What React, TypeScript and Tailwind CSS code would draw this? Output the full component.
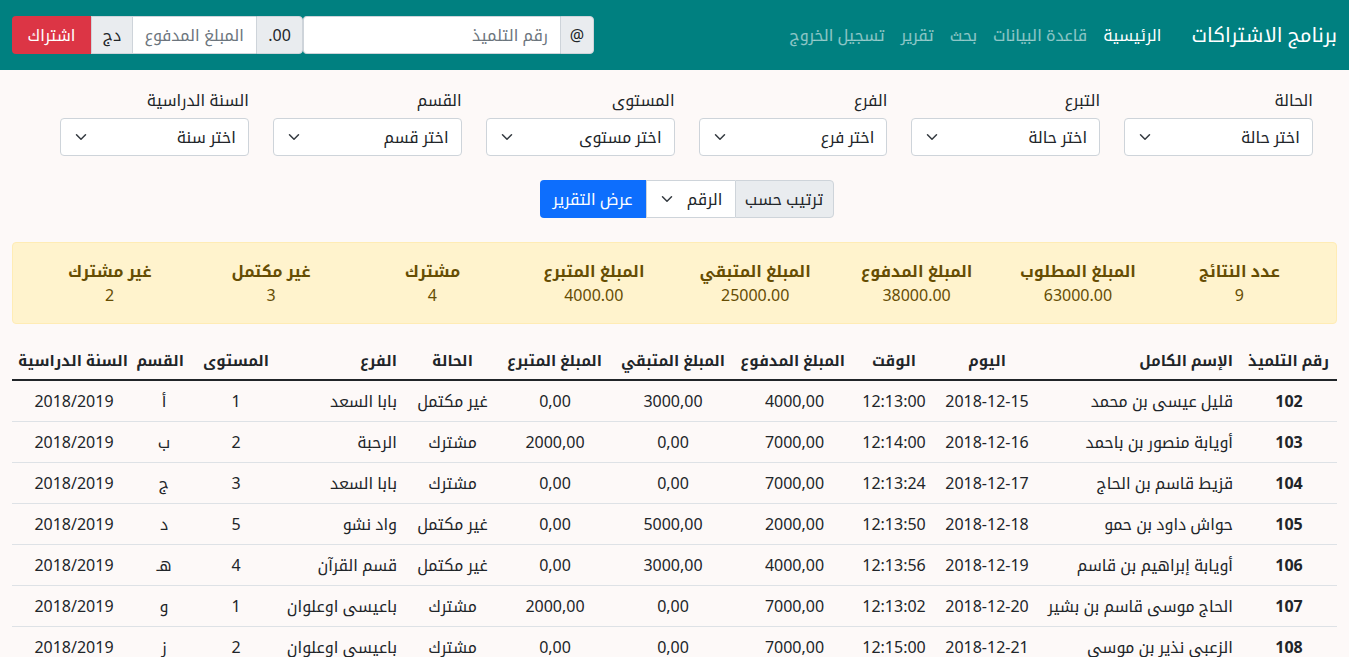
import React from "react";

const Chevron = () => (
  <svg width="16" height="12" viewBox="0 0 16 16" fill="none" stroke="#343a40" strokeWidth="2" strokeLinecap="round" strokeLinejoin="round">
    <path d="m2 5 6 6 6-6" />
  </svg>
);

const FakeSelect = ({ text, className = "" }: { text: string; className?: string }) => (
  <div className={`h-[38px] flex items-center justify-between bg-white border border-[#ced4da] px-3 text-[#212529] ${className}`}>
    <span>{text}</span>
    <Chevron />
  </div>
);

const filters = [
  { label: "الحالة", value: "اختر حالة" },
  { label: "التبرع", value: "اختر حالة" },
  { label: "الفرع", value: "اختر فرع" },
  { label: "المستوى", value: "اختر مستوى" },
  { label: "القسم", value: "اختر قسم" },
  { label: "السنة الدراسية", value: "اختر سنة" },
];

const stats = [
  { title: "عدد النتائج", value: "9" },
  { title: "المبلغ المطلوب", value: "63000.00" },
  { title: "المبلغ المدفوع", value: "38000.00" },
  { title: "المبلغ المتبقي", value: "25000.00" },
  { title: "المبلغ المتبرع", value: "4000.00" },
  { title: "مشترك", value: "4" },
  { title: "غير مكتمل", value: "3" },
  { title: "غير مشترك", value: "2" },
];

const rows = [
  ["102", "قليل عيسى بن محمد", "2018-12-15", "12:13:00", "4000,00", "3000,00", "0,00", "غير مكتمل", "بابا السعد", "1", "أ"],
  ["103", "أويابة منصور بن باحمد", "2018-12-16", "12:14:00", "7000,00", "0,00", "2000,00", "مشترك", "الرحبة", "2", "ب"],
  ["104", "قزيط قاسم بن الحاج", "2018-12-17", "12:13:24", "7000,00", "0,00", "0,00", "مشترك", "بابا السعد", "3", "ج"],
  ["105", "حواش داود بن حمو", "2018-12-18", "12:13:50", "2000,00", "5000,00", "0,00", "غير مكتمل", "واد نشو", "5", "د"],
  ["106", "أويابة إبراهيم بن قاسم", "2018-12-19", "12:13:56", "4000,00", "3000,00", "0,00", "غير مكتمل", "قسم القرآن", "4", "هـ"],
  ["107", "الحاج موسى قاسم بن بشير", "2018-12-20", "12:13:02", "7000,00", "0,00", "2000,00", "مشترك", "باعيسى اوعلوان", "1", "و"],
  ["108", "الزعبي نذير بن موسى", "2018-12-21", "12:15:00", "7000,00", "0,00", "0,00", "مشترك", "باعيسى اوعلوان", "2", "ز"],
  ["109", "بكلي يوسف بن عمر", "2018-12-22", "12:16:10", "0,00", "7000,00", "0,00", "غير مشترك", "الرحبة", "3", "ح"],
  ["110", "حمودة صالح بن أحمد", "2018-12-23", "12:17:45", "0,00", "7000,00", "0,00", "غير مشترك", "واد نشو", "4", "ط"],
];

const headers = [
  { t: "رقم التلميذ", w: "w-[96px]", a: "text-center" },
  { t: "الإسم الكامل", w: "w-[202px]", a: "text-right" },
  { t: "اليوم", w: "w-[104px]", a: "text-center" },
  { t: "الوقت", w: "w-[82px]", a: "text-center" },
  { t: "المبلغ المدفوع", w: "w-[117px]", a: "text-center" },
  { t: "المبلغ المتبقي", w: "w-[126px]", a: "text-center" },
  { t: "المبلغ المتبرع", w: "w-[110px]", a: "text-center" },
  { t: "الحالة", w: "w-[95px]", a: "text-center" },
  { t: "الفرع", w: "w-[125px]", a: "text-right" },
  { t: "المستوى", w: "w-[88px]", a: "text-center" },
  { t: "القسم", w: "w-[56px]", a: "text-center" },
  { t: "السنة الدراسية", w: "w-[124px]", a: "text-center" },
];

export default function App() {
  return (
    <div dir="rtl" className="min-h-screen whitespace-nowrap bg-[#fdf9f8] text-[16px] leading-6 text-[#212529] font-['Noto_Sans','Noto_Kufi_Arabic','Noto_Sans_Arabic','DejaVu_Sans',sans-serif]">
      {/* navbar */}
      <nav className="h-[70px] bg-[#008080] flex items-center px-3">
        <div className="text-[20px] text-white ml-[22px]">برنامج الاشتراكات</div>
        <div className="flex items-center">
          <a className="px-2 text-white">الرئيسية</a>
          <a className="px-2 text-white/55">قاعدة البيانات</a>
          <a className="px-2 text-white/55">بحث</a>
          <a className="px-2 text-white/55">تقرير</a>
          <a className="px-2 text-white/55">تسجيل الخروج</a>
        </div>
        <div className="ms-auto flex h-[38px]">
          <div className="flex">
            <span className="w-[34px] flex items-center justify-center bg-[#e9ecef] border border-[#ced4da] rounded-r-[4px]">@</span>
            <div className="w-[257px] flex items-center bg-white border border-[#ced4da] border-r-0 rounded-l-[4px] px-3 text-[#6c757d]">رقم التلميذ</div>
          </div>
          <div className="flex">
            <span dir="ltr" className="w-[47px] flex items-center justify-center bg-[#e9ecef] border border-[#ced4da] rounded-r-[4px]">.00</span>
            <div className="w-[124px] flex items-center overflow-hidden bg-white border border-[#ced4da] border-r-0 px-3 text-[#6c757d]">المبلغ المدفوع</div>
            <span className="w-[41px] flex items-center justify-center bg-[#e9ecef] border border-[#ced4da] border-r-0">دج</span>
            <button className="w-[79px] bg-[#dc3545] text-white rounded-l-[4px]">اشتراك</button>
          </div>
        </div>
      </nav>

      {/* filters */}
      <div className="pr-[36px] pl-[60px] pt-[18px]">
        <div className="flex gap-[24px]">
          {filters.map((f, i) => (
            <div key={i} className="w-[189px]">
              <div className="mb-[6px]">{f.label}</div>
              <FakeSelect text={f.value} className="rounded-[4px]" />
            </div>
          ))}
        </div>

        <div className="flex justify-center mt-[24px]">
          <span className="h-[38px] w-[99px] flex items-center justify-center bg-[#e9ecef] border border-[#ced4da] rounded-r-[4px]">ترتيب حسب</span>
          <FakeSelect text="الرقم" className="w-[89px] border-r-0" />
          <button className="h-[38px] w-[106px] bg-[#0d6efd] text-white rounded-l-[4px]">عرض التقرير</button>
        </div>
      </div>

      {/* summary */}
      <div className="mx-3 mt-[24px] bg-[#fff3cd] border border-[#ffecb5] rounded-[4px] p-4 grid grid-cols-8 text-[#664d03]">
        {stats.map((s, i) => (
          <div key={i} className="text-center">
            <div className="font-bold">{s.title}</div>
            <div>{s.value}</div>
          </div>
        ))}
      </div>

      {/* table */}
      <div className="px-3 mt-[16px]">
        <table className="w-full table-fixed border-collapse">
          <thead>
            <tr className="border-b-2 border-[#212529]">
              {headers.map((h, i) => (
                <th key={i} className={`${h.w} ${h.a} px-2 pt-2 pb-[7px] text-[15px] font-bold align-bottom`}>{h.t}</th>
              ))}
            </tr>
          </thead>
          <tbody>
            {rows.map((r, i) => (
              <tr key={i} className="border-b border-[#dee2e6]">
                <td className="p-2 text-center font-bold">{r[0]}</td>
                <td className="p-2 text-right">{r[1]}</td>
                <td className="p-2 text-center">{r[2]}</td>
                <td className="p-2 text-center">{r[3]}</td>
                <td className="p-2 text-center">{r[4]}</td>
                <td className="p-2 text-center">{r[5]}</td>
                <td className="p-2 text-center">{r[6]}</td>
                <td className="p-2 text-center">{r[7]}</td>
                <td className="p-2 text-right">{r[8]}</td>
                <td className="p-2 text-center">{r[9]}</td>
                <td className="p-2 text-center">{r[10]}</td>
                <td className="p-2 text-center">2018/2019</td>
              </tr>
            ))}
          </tbody>
        </table>
      </div>
    </div>
  );
}
